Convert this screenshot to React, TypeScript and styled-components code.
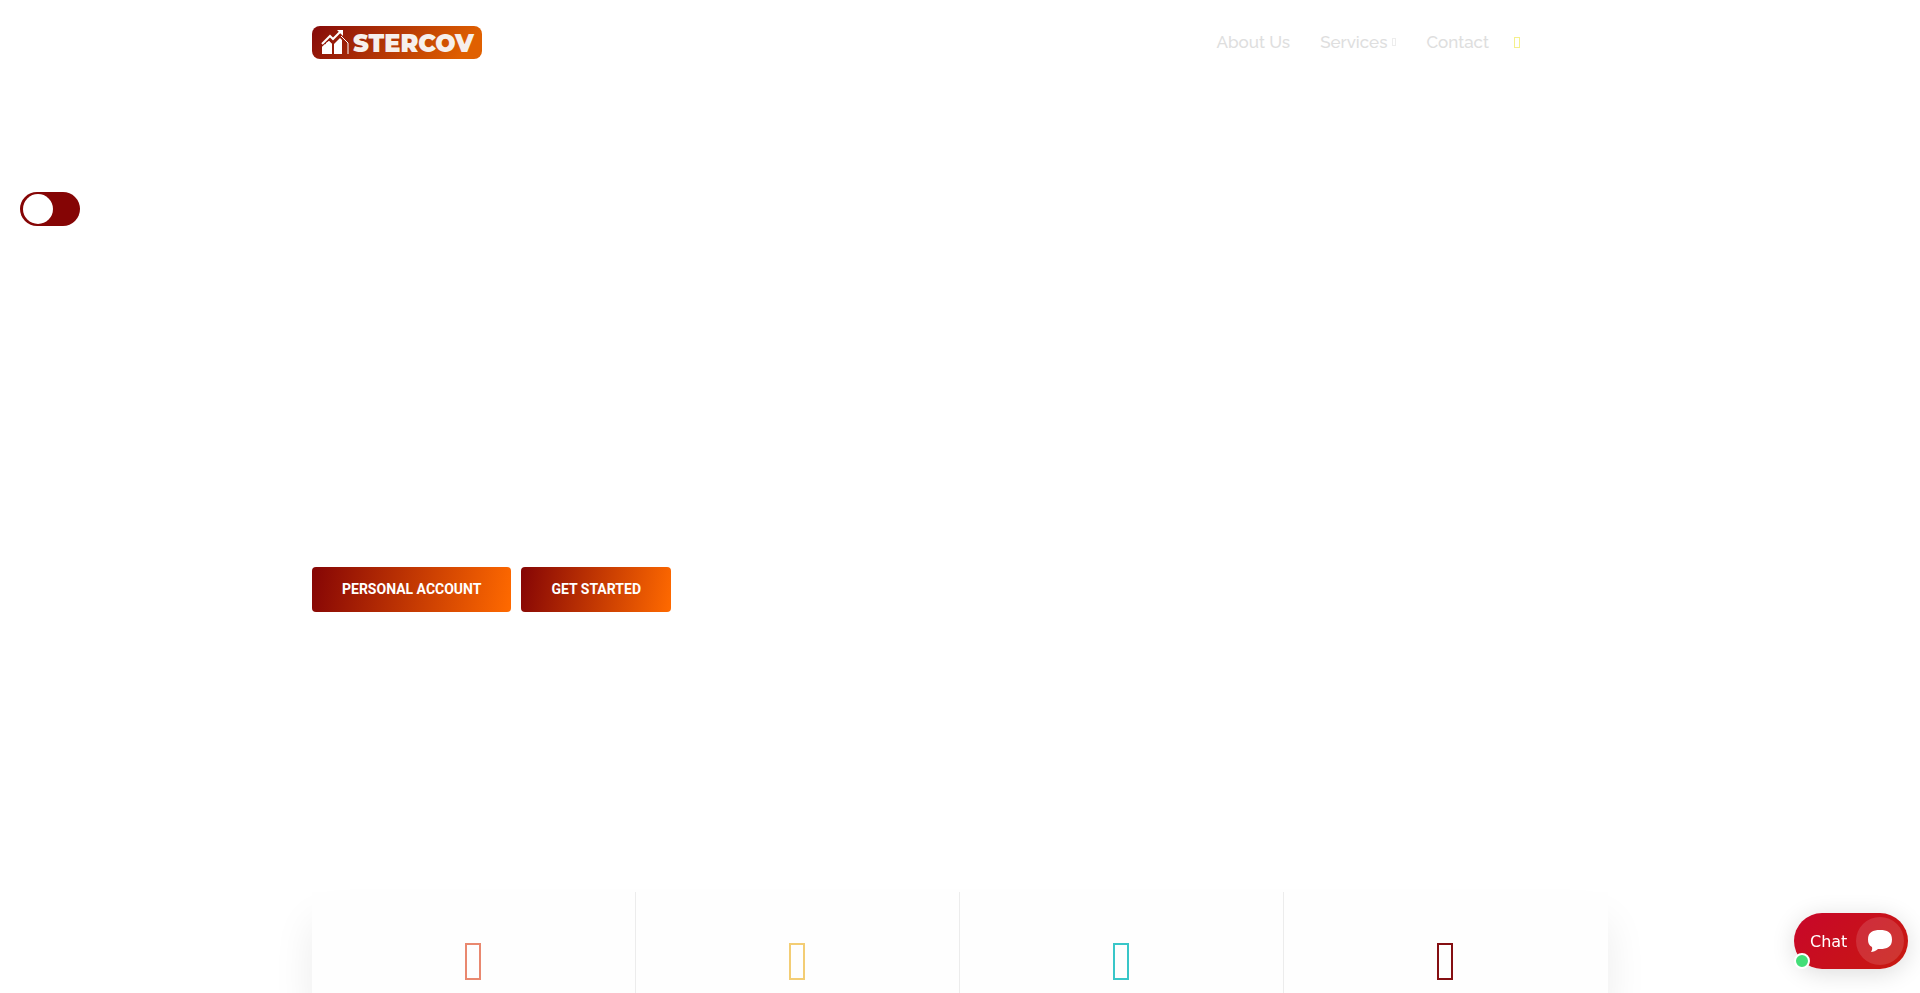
import React, { useState } from "react";
import styled, { createGlobalStyle } from "styled-components";

const GlobalStyle = createGlobalStyle`
  *, *::before, *::after { box-sizing: border-box; }
  body {
    margin: 0;
    background: #fff;
    font-family: Roboto, "Liberation Sans", sans-serif;
  }
`;

const Page = styled.div`
  display: flex;
  flex-direction: column;
  min-height: 100vh;
`;

const Container = styled.div`
  width: 100%;
  max-width: 1320px;
  margin: 0 auto;
  padding: 0 12px;
`;

const HeaderBar = styled(Container)`
  display: flex;
  align-items: center;
  justify-content: space-between;
  height: 85px;
`;

const LogoLink = styled.a`
  display: block;
  line-height: 0;
`;

const Nav = styled.nav`
  display: flex;
  align-items: center;
  gap: 30px;
  padding: 0 88px 1px 0;
`;

const NavLink = styled.a`
  display: flex;
  align-items: center;
  gap: 5px;
  color: #dedede;
  font-family: Raleway, "Open Sans", sans-serif;
  font-size: 17px;
  font-weight: 500;
  line-height: 24px;
  text-decoration: none;
`;

const MissingGlyph = styled.span<{ $w: number; $h: number; $color: string; $line?: number }>`
  display: block;
  width: ${(p) => p.$w}px;
  height: ${(p) => p.$h}px;
  border: ${(p) => p.$line ?? 1}px solid ${(p) => p.$color};
`;

const ThemeButton = styled.button`
  padding: 0;
  margin-left: -5px;
  border: 0;
  background: none;
  cursor: pointer;
`;

const ThemeSwitch = styled.label`
  position: fixed;
  top: 192px;
  left: 20px;
  display: block;
  width: 60px;
  height: 34px;
`;

const ThemeInput = styled.input`
  appearance: none;
  display: flex;
  align-items: center;
  width: 60px;
  height: 34px;
  margin: 0;
  padding: 0 3px;
  border-radius: 17px;
  background: #850505;
  cursor: pointer;

  &::before {
    content: "";
    width: 30px;
    height: 30px;
    border-radius: 50%;
    background: #fff;
  }
  &:checked::before { margin-left: 24px; }
`;

const Hero = styled(Container)`
  padding-top: 482px;
  padding-bottom: 280px;
`;

const Actions = styled.div`
  display: flex;
  flex-wrap: wrap;
  gap: 10px;
`;

const ActionButton = styled.button`
  height: 45px;
  padding: 0 30px 2px;
  border: 0;
  border-radius: 4px;
  background: linear-gradient(100deg, #850505 0%, #ff6a00 100%);
  color: #fff;
  font-family: Roboto, sans-serif;
  font-size: 14px;
  font-weight: 700;
  text-transform: uppercase;
  cursor: pointer;
`;

const Features = styled(Container)`
  display: flex;
  flex: 1;
`;

const FeatureGrid = styled.section`
  display: grid;
  grid-template-columns: repeat(4, 1fr);
  flex: 1;
  background: #fefefe;
  box-shadow: 0 30px 40px rgba(0, 0, 0, 0.08);
`;

const FeatureCard = styled.article`
  display: flex;
  justify-content: center;
  align-items: flex-start;
  padding: 51px 1px 0 0;
  border-right: 1px solid #ececec;

  &:last-child { border-right-color: transparent; }
`;

const ChatButton = styled.button`
  position: fixed;
  right: 12px;
  bottom: 24px;
  display: flex;
  align-items: center;
  justify-content: space-between;
  width: 114px;
  height: 56px;
  padding: 0 4px 0 16px;
  border: 0;
  border-radius: 28px;
  background: linear-gradient(135deg, #c8062a, #c81a0f);
  box-shadow: 0 4px 24px rgba(0, 0, 0, 0.14);
  color: #fff;
  font-family: "DejaVu Sans", sans-serif;
  font-size: 16px;
  cursor: pointer;
`;

const ChatBubble = styled.span`
  display: flex;
  align-items: center;
  justify-content: center;
  width: 48px;
  height: 48px;
  border-radius: 50%;
  background: rgba(255, 255, 255, 0.13);
`;

const OnlineDot = styled.span`
  position: absolute;
  left: 0;
  bottom: 0;
  width: 16px;
  height: 16px;
  border: 2px solid #fff;
  border-radius: 50%;
  background: #43de78;
`;

const features = ["#e9886f", "#f3cd74", "#38c6c8", "#850f12"];

function Logo() {
  return (
    <svg width="170" height="33" viewBox="0 0 170 33" role="img" aria-label="Stercov">
      <defs>
        <linearGradient id="logoFill" x1="0" y1="0" x2="1" y2="0.15">
          <stop offset="0" stopColor="#850a0a" />
          <stop offset="1" stopColor="#e06000" />
        </linearGradient>
      </defs>
      <rect width="170" height="33" rx="8" fill="url(#logoFill)" />
      <g fill="#fff">
        <path d="M10 28V21L17 15L20 18V28H18V20H14V28Z" />
        <path d="M10 21L13 18V28H10Z" />
        <path d="M14 17L17 15L20 18V28H14Z" />
        <path d="M22 18L28 12L30 14V28H22Z" />
      </g>
      <path d="M10 18L18 10L21 13L28 6" fill="none" stroke="#fff" strokeWidth="2" />
      <path d="M25 4H31V10Z" fill="#fff" />
      <path d="M29 10L36 17V28" fill="none" stroke="#fff" strokeWidth="1" />
      <text
        x="41"
        y="26"
        fill="#f6efec"
        fontFamily="Montserrat, Inter, sans-serif"
        fontSize="24"
        fontWeight="900"
      >
        STERCOV
      </text>
    </svg>
  );
}

export default function App() {
  const [dark, setDark] = useState(false);
  return (
    <Page>
      <GlobalStyle />
      <header>
        <HeaderBar>
          <LogoLink href="#home"><Logo /></LogoLink>
          <Nav aria-label="Main">
            <NavLink href="#about">About Us</NavLink>
            <NavLink href="#services">
              Services
              <MissingGlyph $w={4} $h={8} $color="#ededed" aria-hidden />
            </NavLink>
            <NavLink href="#contact">Contact</NavLink>
            <ThemeButton type="button" aria-label="Light mode">
              <MissingGlyph $w={6} $h={11} $color="#f5f08c" />
            </ThemeButton>
          </Nav>
        </HeaderBar>
      </header>

      <ThemeSwitch>
        <ThemeInput
          type="checkbox"
          role="switch"
          aria-label="Dark theme"
          checked={dark}
          onChange={(e) => setDark(e.target.checked)}
        />
      </ThemeSwitch>

      <Hero as="main">
        <Actions>
          <ActionButton type="button">Personal Account</ActionButton>
          <ActionButton type="button">Get Started</ActionButton>
        </Actions>
      </Hero>

      <Features>
        <FeatureGrid aria-label="Features">
          {features.map((color) => (
            <FeatureCard key={color}>
              <MissingGlyph $w={16} $h={37} $line={2} $color={color} aria-hidden />
            </FeatureCard>
          ))}
        </FeatureGrid>
      </Features>

      <ChatButton type="button">
        Chat
        <ChatBubble>
          <svg width="24" height="22" viewBox="0 0 24 22" aria-hidden="true">
            <path
              d="M12 0C19 0 24 2 24 9.500C24 17 19 19 12 19H10C8 21 5 22 3 22C4 20.500 4.500 19 4 17C1 15.500 0 13 0 9.500C0 2 5 0 12 0Z"
              fill="#fff"
            />
          </svg>
        </ChatBubble>
        <OnlineDot />
      </ChatButton>
    </Page>
  );
}
